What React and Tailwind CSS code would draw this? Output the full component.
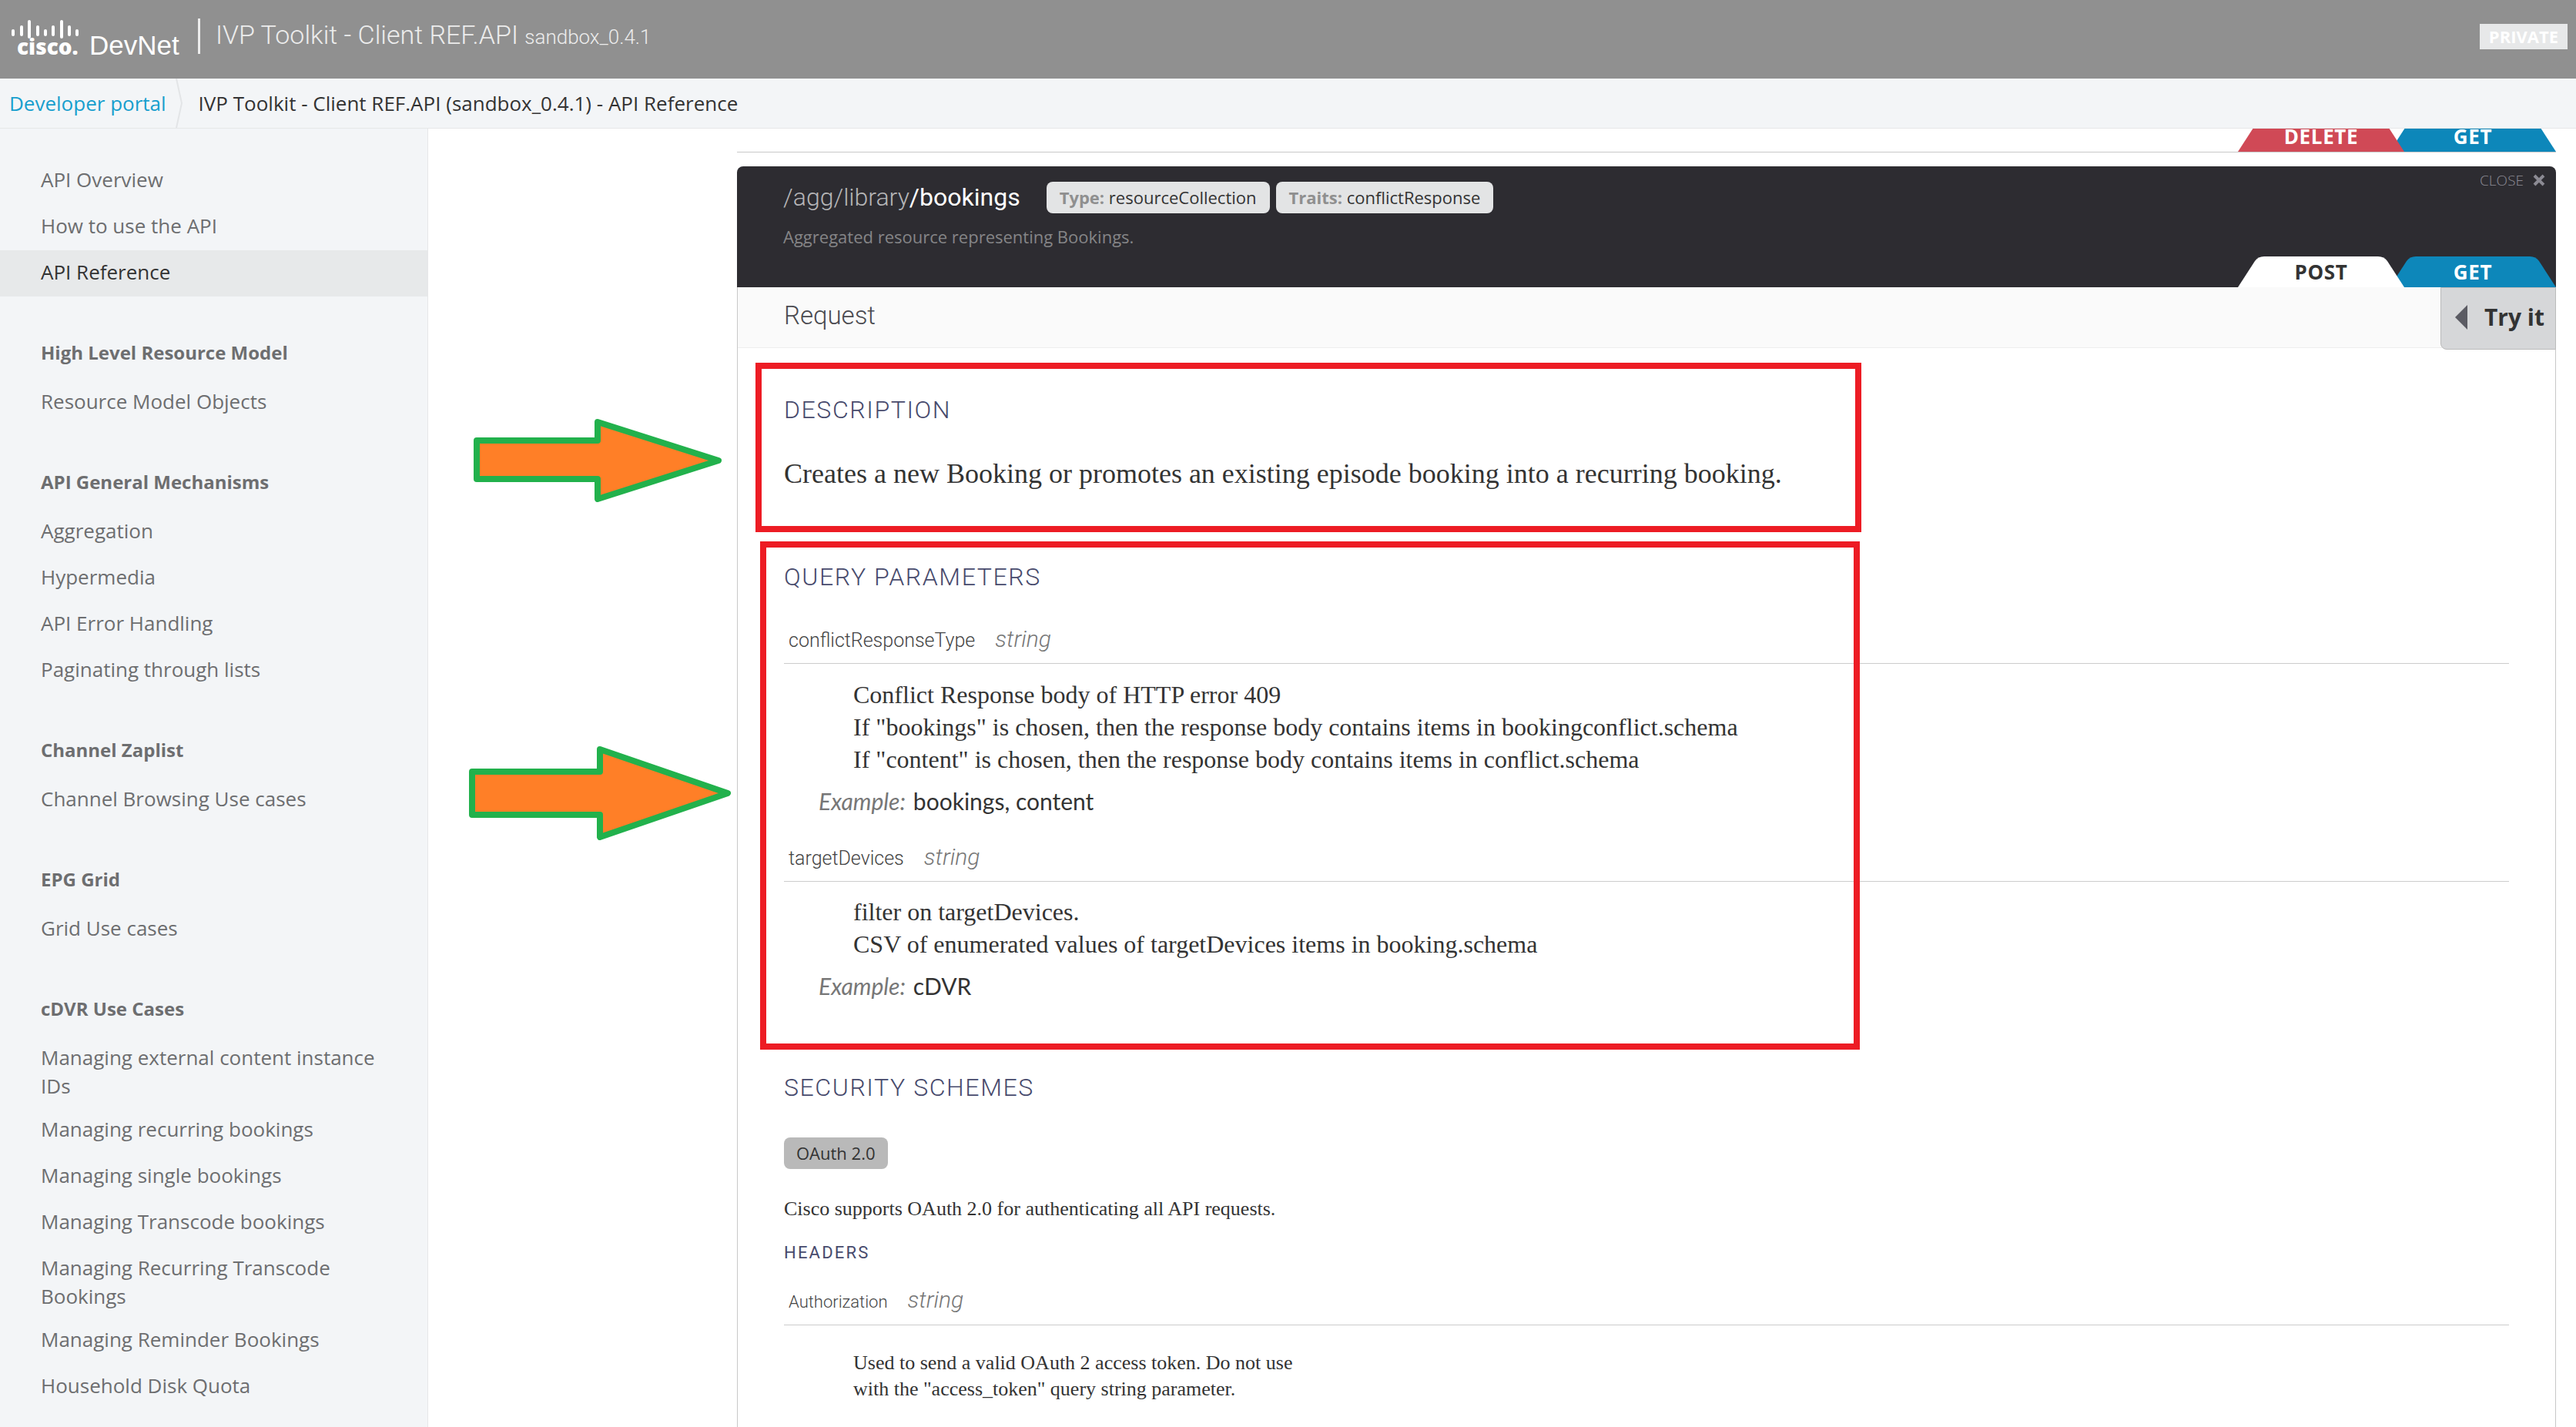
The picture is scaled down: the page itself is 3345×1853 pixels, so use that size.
import React from "react";

const navGroups = [
  { title: null, items: ["API Overview", "How to use the API", "API Reference"] },
  { title: "High Level Resource Model", items: ["Resource Model Objects"] },
  {
    title: "API General Mechanisms",
    items: ["Aggregation", "Hypermedia", "API Error Handling", "Paginating through lists"],
  },
  { title: "Channel Zaplist", items: ["Channel Browsing Use cases"] },
  { title: "EPG Grid", items: ["Grid Use cases"] },
  {
    title: "cDVR Use Cases",
    items: [
      "Managing external content instance IDs",
      "Managing recurring bookings",
      "Managing single bookings",
      "Managing Transcode bookings",
      "Managing Recurring Transcode Bookings",
      "Managing Reminder Bookings",
      "Household Disk Quota",
    ],
  },
];

function CiscoLogo() {
  const bars = [
    [17, 19, 24],
    [28, 14, 24],
    [38, 7, 27],
    [49, 14, 24],
    [59, 19, 24],
    [69, 14, 24],
    [80, 7, 27],
    [90, 14, 24],
    [100, 19, 24],
  ];
  return (
    <svg viewBox="0 0 240 60" className="h-[60px] w-[240px] shrink-0" role="img" aria-label="Cisco DevNet">
      <g stroke="#fff" strokeWidth="4" strokeLinecap="round">
        {bars.map(([x, y1, y2]) => (
          <line key={x} x1={x} x2={x} y1={y1} y2={y2} />
        ))}
      </g>
      <text x="22" y="50" fontFamily="Open Sans, sans-serif" fontWeight="800" fontSize="28" fill="#fff">cisco.</text>
      <text x="116" y="50" fontFamily="Liberation Sans, sans-serif" fontSize="35" fill="#fff">DevNet</text>
    </svg>
  );
}

function Tab({ label, fill, className }) {
  return (
    <button type="button" className={`relative h-10 w-[216px] shrink-0 text-[26px] leading-[38px] font-bold tracking-wide ${className}`}>
      <svg viewBox="0 0 216 40" className="absolute inset-0 h-full w-full" aria-hidden="true">
        <path d="M0 40 L22 6 Q26 0 34 0 H182 Q190 0 194 6 L216 40 Z" fill={fill} />
      </svg>
      <span className="relative">{label}</span>
    </button>
  );
}

function Tag({ name, value }) {
  return (
    <span className="rounded-lg bg-[#e3e4e5] px-[17px] text-[22px] leading-[41px] text-[#333]">
      <b className="font-bold text-[#8f8f8f]">{name}:</b> {value}
    </span>
  );
}

function Heading({ children, className }) {
  return (
    <h4 className={`font-['Roboto'] text-[32px] leading-10 font-light tracking-wider text-[#474a6c] ${className}`}>
      {children}
    </h4>
  );
}

function Param({ name, small }) {
  return (
    <div className="flex items-baseline gap-[26px] border-b border-[#ccc] pb-2.5 pl-1.5 font-['Roboto'] leading-[38px] font-light">
      <span className={small ? "text-[22px] text-[#444]" : "text-[25px] text-[#444]"}>{name}</span>
      <i className="text-[30px] text-[#777]">string</i>
    </div>
  );
}

function Example({ value }) {
  return (
    <p className="mt-3 flex gap-2.5 pl-[45px] font-['Lato',sans-serif] text-[30px] leading-[42px] text-[#333]">
      <i className="text-[#777]">Example:</i>
      <span>{value}</span>
    </p>
  );
}

function Arrow({ className, viewBox, points }) {
  return (
    <svg viewBox={viewBox} className={`absolute ${className}`} aria-hidden="true">
      <polygon points={points} fill="#ff7f27" stroke="#22b14c" strokeWidth="8" strokeLinejoin="round" />
    </svg>
  );
}

export default function App() {
  return (
    <div className="flex h-screen flex-col overflow-hidden bg-white font-['Open_Sans',sans-serif] text-[#333]">
      <header className="flex h-[102px] shrink-0 items-start justify-between bg-[#909090] pr-[11px] text-[#ececec]">
        <div className="flex items-start">
          <div className="pt-[21px]">
            <CiscoLogo />
          </div>
          <div className="mt-6 ml-[17px] h-[46px] w-[3px] bg-[#ececec]" />
          <h1 className="mt-[22px] ml-5 font-['Roboto'] text-[34px] leading-[46px] font-light">
            IVP Toolkit - Client REF.API <small className="text-[26px]">sandbox_0.4.1</small>
          </h1>
        </div>
        <span className="mt-[31px] bg-[#e7e8e9] px-3 text-[22px] leading-[33px] font-bold text-white">PRIVATE</span>
      </header>

      <nav className="flex h-[65px] shrink-0 items-center border-b border-[#e6e7e8] bg-[#f3f5f7] text-[26px]" aria-label="Breadcrumb">
        <a href="#portal" className="pl-3 text-[#189fce]">Developer portal</a>
        <svg viewBox="0 0 10 64" className="ml-3 h-16 w-2.5" aria-hidden="true">
          <path d="M1 0 L8 32 L1 64" fill="none" stroke="#e3e5e7" strokeWidth="2" />
        </svg>
        <span className="ml-5">IVP Toolkit - Client REF.API (sandbox_0.4.1) - API Reference</span>
      </nav>

      <div className="flex min-h-0 flex-1">
        <aside className="w-[556px] shrink-0 border-r border-[#e6e7e8] bg-[#f3f5f7] pt-[38px] text-[#6d6e70]">
          {navGroups.map((group) => (
            <section key={group.items[0]}>
              {group.title && (
                <h2 className="mt-[54px] mb-[17px] pl-[53px] text-[24px] leading-[37px] font-bold">{group.title}</h2>
              )}
              <ul>
                {group.items.map((item) => (
                  <li key={item}>
                    <a
                      href="#section"
                      className={`block min-h-[60px] pt-2.5 pr-14 pb-[9px] pl-[53px] text-[26px] leading-[37px] ${
                        item === "API Reference" ? "bg-[#e7e9ea] text-[#333]" : ""
                      }`}
                    >
                      {item}
                    </a>
                  </li>
                ))}
              </ul>
            </section>
          ))}
        </aside>

        <main className="relative flex min-w-0 flex-1 flex-col pr-[26px] pl-[401px]">
          <div className="flex h-[31px] shrink-0 items-end justify-end overflow-hidden border-b border-[#c8c8c8]">
            <Tab label="DELETE" fill="#d04956" className="z-10 -mr-[19px] text-white" />
            <Tab label="GET" fill="#0d87ba" className="text-white" />
          </div>

          <article className="relative mt-[18px] flex min-h-0 flex-1 flex-col">
            <header className="flex h-[157px] shrink-0 justify-between rounded-t-lg bg-[#2d2c31] pl-[60px]">
              <div className="pt-5">
                <div className="flex items-center gap-2">
                  <h2 className="mr-[26px] font-['Roboto'] text-[32px] leading-[41px] font-light text-[#b5b5b7]">
                    /agg/library<span className="font-normal text-white">/bookings</span>
                  </h2>
                  <Tag name="Type" value="resourceCollection" />
                  <Tag name="Traits" value="conflictResponse" />
                </div>
                <p className="mt-3 text-[22px] leading-9 text-[#858587]">Aggregated resource representing Bookings.</p>
              </div>
              <div className="flex flex-col items-end justify-between">
                <button type="button" className="flex items-center gap-3 pr-[14px] text-[19px] leading-9 font-light text-[#8b8a93]">
                  CLOSE
                  <svg viewBox="0 0 16 16" className="size-4" aria-hidden="true">
                    <path d="M2 2 L14 14 M14 2 L2 14" stroke="#8b8a93" strokeWidth="4" />
                  </svg>
                </button>
                <div className="flex">
                  <Tab label="POST" fill="#fff" className="z-10 -mr-[19px] text-[#333]" />
                  <Tab label="GET" fill="#0d87ba" className="text-white" />
                </div>
              </div>
            </header>

            <div className="flex min-h-0 flex-1 flex-col border-x border-[#c8c8c8]">
              <div className="flex h-[79px] shrink-0 items-start justify-between border-b border-[#eee] bg-[#fafafa] pl-[60px]">
                <h3 className="font-['Roboto'] text-[33px] leading-[74px] font-light text-[#4a4a50]">Request</h3>
                <button
                  type="button"
                  className="-mr-px flex h-[81px] items-center gap-[22px] rounded-bl-lg border border-[#bbb] bg-[#d6d7d9] pr-3.5 pb-1 pl-[18px] text-[30px] font-bold"
                >
                  <svg viewBox="0 0 16 32" className="h-8 w-4" aria-hidden="true">
                    <path d="M16 0 V32 L0 16 Z" fill="#5b5b63" />
                  </svg>
                  Try it
                </button>
              </div>

              <div className="min-h-0 flex-1 overflow-hidden pr-[60px] pl-[60px] font-['Liberation_Serif',serif]">
                <Heading className="mt-[60px]">DESCRIPTION</Heading>
                <p className="mt-[42px] text-[36px] leading-[42px]">
                  Creates a new Booking or promotes an existing episode booking into a recurring booking.
                </p>
                <Heading className="mt-[93px]">QUERY PARAMETERS</Heading>
                <div className="mt-[42px]">
                  <Param name="conflictResponseType" />
                  <div className="mt-[19px] pl-[90px] text-[32px] leading-[42px]">
                    <p>Conflict Response body of HTTP error 409</p>
                    <p>If "bookings" is chosen, then the response body contains items in bookingconflict.schema</p>
                    <p>If "content" is chosen, then the response body contains items in conflict.schema</p>
                  </div>
                  <Example value="bookings, content" />
                </div>
                <div className="mt-[33px]">
                  <Param name="targetDevices" />
                  <div className="mt-[18px] pl-[90px] text-[32px] leading-[42px]">
                    <p>filter on targetDevices.</p>
                    <p>CSV of enumerated values of targetDevices items in booking.schema</p>
                  </div>
                  <Example value="cDVR" />
                </div>
                <Heading className="mt-[91px]">SECURITY SCHEMES</Heading>
                <button type="button" className="mt-[45px] block rounded-lg bg-[#b9b9b9] px-4 font-['Open_Sans'] text-[22px] leading-[41px]">
                  OAuth 2.0
                </button>
                <p className="mt-[35px] text-[26px] leading-[34px]">Cisco supports OAuth 2.0 for authenticating all API requests.</p>
                <h5 className="mt-6 font-['Roboto'] text-[22px] leading-[32px] tracking-widest text-[#474a6c]">HEADERS</h5>
                <div className="mt-[26px]">
                  <Param name="Authorization" small />
                  <p className="mt-[32px] pl-[90px] text-[26px] leading-[34px]">
                    Used to send a valid OAuth 2 access token. Do not use
                    <br />
                    with the "access_token" query string parameter.
                  </p>
                </div>
              </div>
            </div>

            <div className="pointer-events-none absolute top-[255px] left-6 h-[220px] w-[1436px] border-8 border-[#ed1c24]" />
            <div className="pointer-events-none absolute top-[487px] left-[30px] h-[660px] w-[1428px] border-8 border-[#ed1c24]" />
          </article>

          <Arrow
            className="top-[377px] left-[59px] h-[108px] w-[322px]"
            viewBox="0 0 322 108"
            points="4,28 161,28 161,4 318,54 161,104 161,78 4,78"
          />
          <Arrow
            className="top-[802px] left-[53px] h-[122px] w-[340px]"
            viewBox="0 0 340 122"
            points="4,33 170,33 170,4 336,61 170,118 170,89 4,89"
          />
        </main>
      </div>
    </div>
  );
}
